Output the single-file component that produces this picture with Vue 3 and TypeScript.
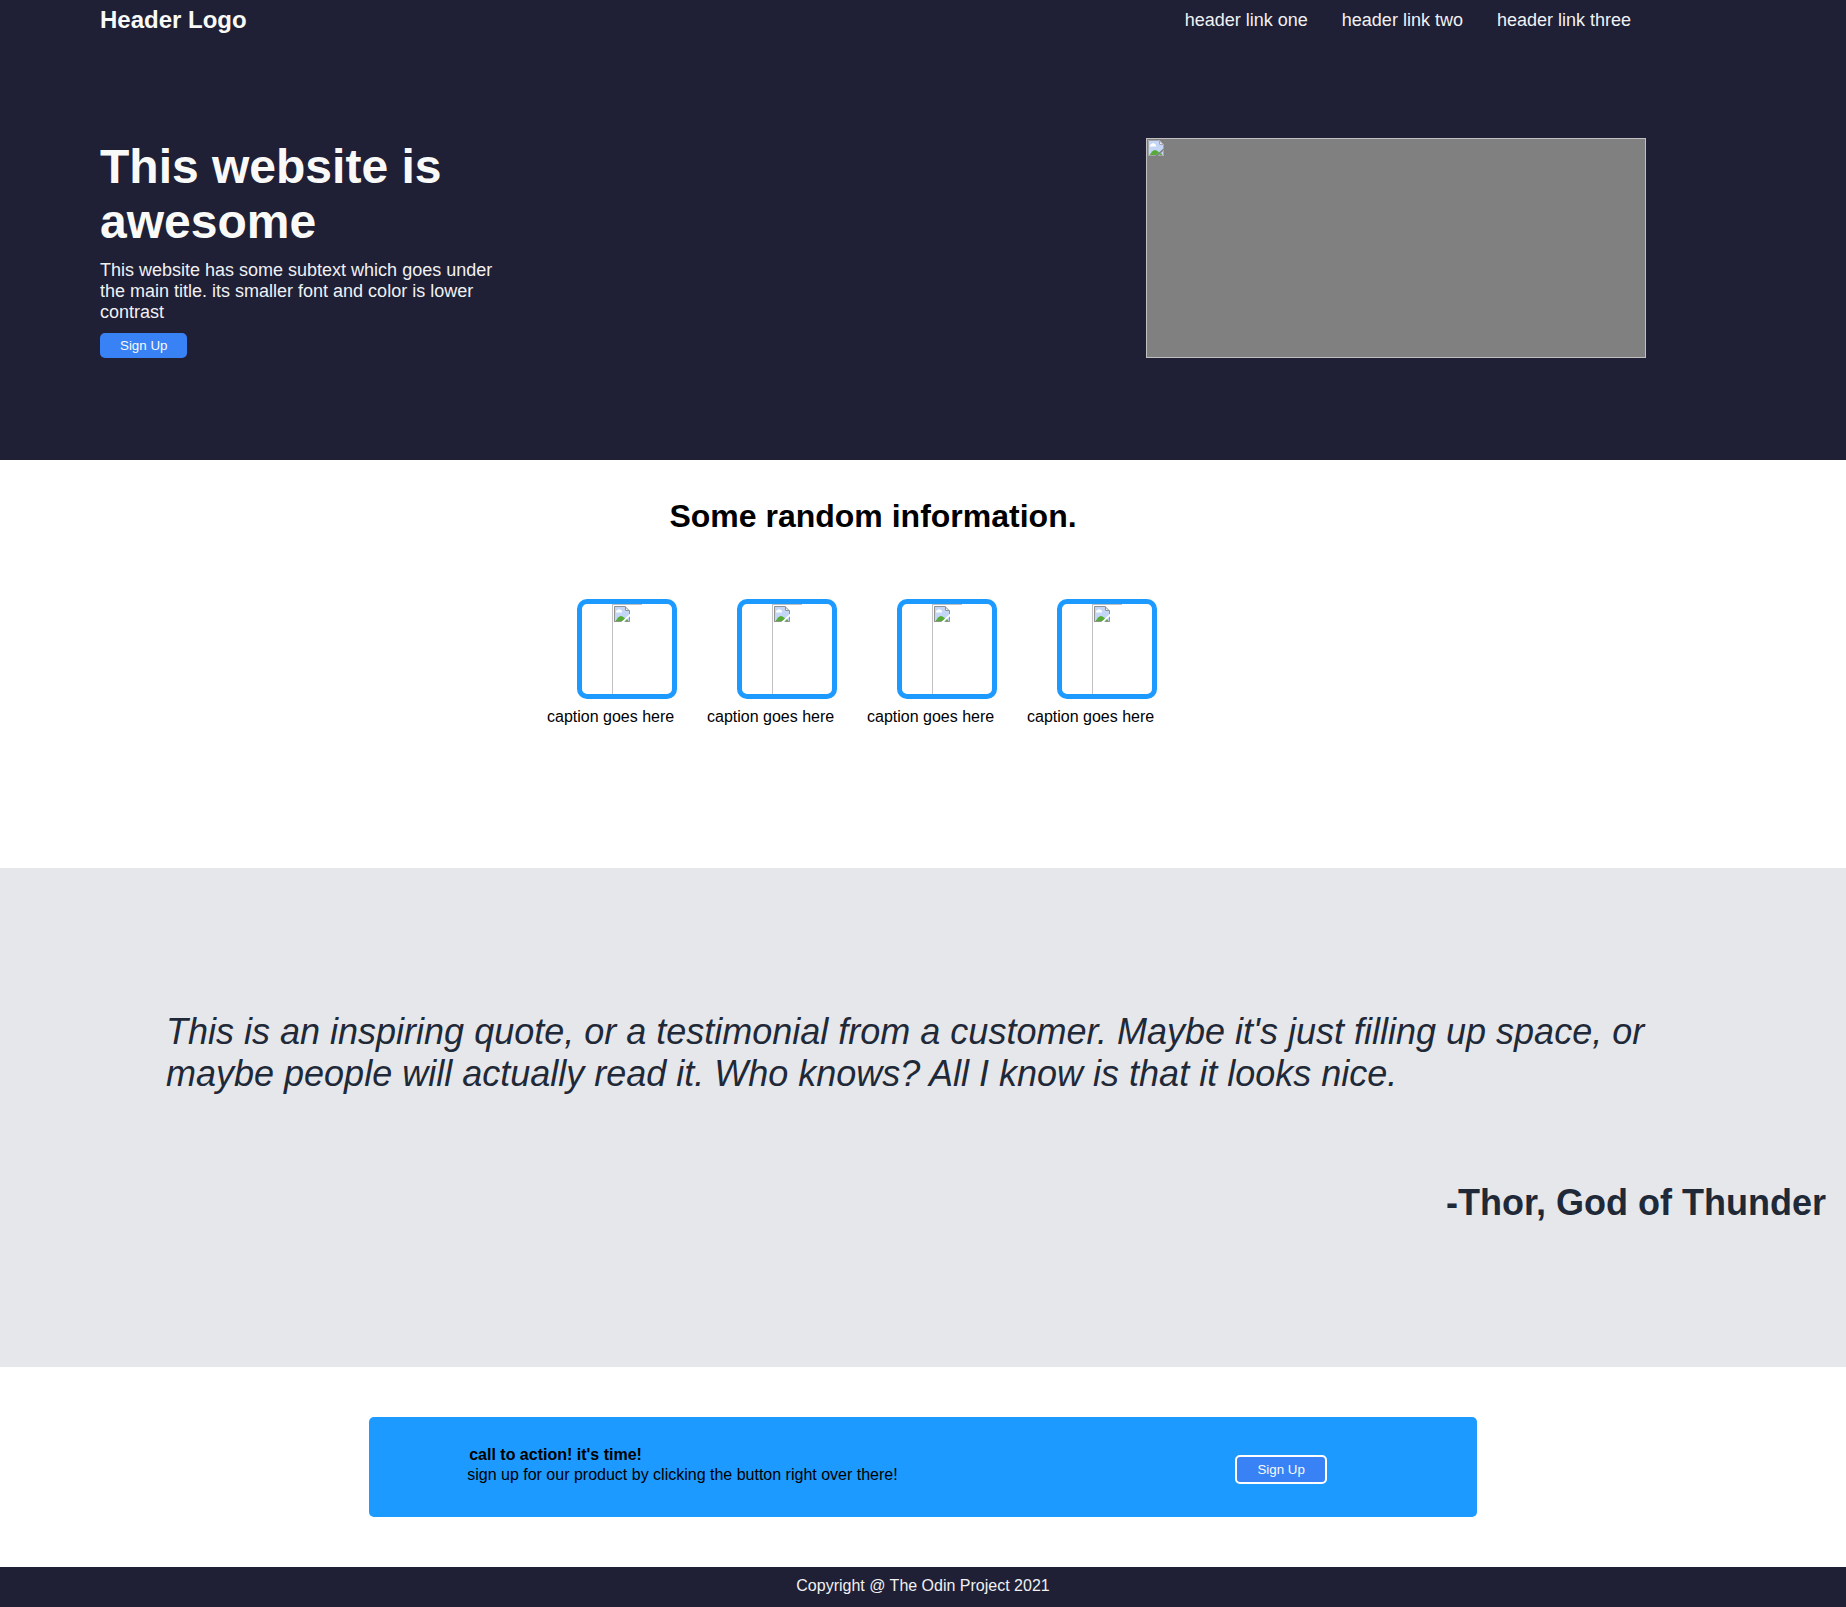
<script setup lang="ts">
interface NavLink {
  label: string
  href: string
}

const links: NavLink[] = [
  { label: 'header link one', href: '#one' },
  { label: 'header link two', href: '#two' },
  { label: 'header link three', href: '#three' },
]

const captions: string[] = Array.from({ length: 4 }, () => 'caption goes here')
</script>

<template>
  <div class="page">
    <div class="banner">
      <header class="header">
        <div class="logo">Header Logo</div>
        <nav class="nav">
          <a v-for="link in links" :key="link.href" :href="link.href">{{ link.label }}</a>
        </nav>
      </header>
      <section class="hero">
        <div class="hero-text">
          <h1>This website is awesome</h1>
          <p>
            This website has some subtext which goes under the main title. its smaller font and
            color is lower contrast
          </p>
          <button type="button" class="button">Sign Up</button>
        </div>
        <div class="hero-image">
          <svg width="16" height="16" viewBox="0 0 16 16" aria-hidden="true">
            <path d="M0 0H11L16 5V8L7 16H0Z" fill="#c3d6f6" />
            <path d="M2 6.5V5L3.5 4L5 3L7 4L8 5V6.5Z" fill="#fff" />
            <path d="M1 16L4 11.5Q7 8.5 10 11.5L11 12.5L7 16Z" fill="#55ab35" />
            <path d="M16 10V16H10Z" fill="#c3d6f6" />
            <path d="M13 13L15 16H10.5Z" fill="#55ab35" />
            <path d="M11 0L16 5H11Z" fill="#f4f4f4" />
            <path d="M0.5 16V0.5H11L15.5 5V8M11.5 0.5V4.5H15.5M0 15.5H7M11 15.5H15.5V11" fill="none" stroke="#a3a5ab" />
          </svg>
        </div>
      </section>
    </div>

    <section class="info">
      <h2>Some random information.</h2>
      <ul class="cards">
        <li v-for="(caption, index) in captions" :key="index">
          <div class="frame">
            <div class="picture">
              <svg width="16" height="16" viewBox="0 0 16 16" aria-hidden="true">
                <path d="M0 0H11L16 5V8L7 16H0Z" fill="#c3d6f6" />
                <path d="M2 6.5V5L3.5 4L5 3L7 4L8 5V6.5Z" fill="#fff" />
                <path d="M1 16L4 11.5Q7 8.5 10 11.5L11 12.5L7 16Z" fill="#55ab35" />
                <path d="M16 10V16H10Z" fill="#c3d6f6" />
                <path d="M13 13L15 16H10.5Z" fill="#55ab35" />
                <path d="M11 0L16 5H11Z" fill="#f4f4f4" />
                <path d="M0.5 16V0.5H11L15.5 5V8M11.5 0.5V4.5H15.5M0 15.5H7M11 15.5H15.5V11" fill="none" stroke="#929292" />
              </svg>
            </div>
          </div>
          <p>{{ caption }}</p>
        </li>
      </ul>
    </section>

    <section class="quote">
      <blockquote>
        This is an inspiring quote, or a testimonial from a customer. Maybe it's just filling up
        space, or maybe people will actually read it. Who knows? All I know is that it looks nice.
      </blockquote>
      <p class="author">-Thor, God of Thunder</p>
    </section>

    <section class="action">
      <div class="action-box">
        <div class="action-text">
          <h3>call to action! it's time!</h3>
          <p>sign up for our product by clicking the button right over there!</p>
        </div>
        <button type="button" class="button outlined">Sign Up</button>
      </div>
    </section>

    <footer class="footer">Copyright @ The Odin Project 2021</footer>
  </div>
</template>

<style>
body {
  margin: 0;
}
</style>

<style scoped>
.page {
  font-family: "Liberation Sans", Arial, sans-serif;
  font-size: 16px;
  color: #000;
  background: #fff;
}

h1,
h2,
h3,
p,
ul,
blockquote {
  margin: 0;
  padding: 0;
}

.banner {
  padding: 0 200px 102px 100px;
  background: #1f1f36;
}

.header {
  display: flex;
  align-items: center;
  justify-content: space-between;
  height: 40px;
}

.logo {
  font-size: 24px;
  font-weight: bold;
  color: #f9faf8;
}

.nav {
  display: flex;
  gap: 34px;
  padding-right: 15px;
}

.nav a {
  font-size: 18px;
  color: #f0f1f2;
  text-decoration: none;
}

.hero {
  display: flex;
  align-items: stretch;
  justify-content: space-between;
  padding-top: 98px;
}

.hero-text {
  width: 400px;
}

h1 {
  padding-top: 1px;
  font-size: 48px;
  line-height: 55px;
  color: #f9faf8;
}

.hero-text p {
  margin: 11px 0 10px;
  font-size: 18px;
  line-height: 21px;
  color: #f0f1f2;
}

.button {
  display: block;
  padding: 5px 20px;
  border: 0;
  border-radius: 5px;
  font-family: inherit;
  line-height: 15px;
  color: #f9faf8;
  background: #3882f6;
}

.hero-image {
  box-sizing: border-box;
  width: 500px;
  padding: 1px;
  border: 1px solid #c0c0c0;
  background: #808080;
}

svg {
  display: block;
}

.info {
  padding: 38px 200px 142px 100px;
}

h2 {
  font-size: 32px;
  line-height: 37px;
  text-align: center;
}

.cards {
  display: flex;
  justify-content: center;
  margin-top: 64px;
  padding-right: 12px;
  list-style: none;
}

.cards li {
  width: 160px;
}

.frame {
  box-sizing: border-box;
  width: 100px;
  height: 100px;
  margin-left: 30px;
  padding-left: 30px;
  border: 5px solid #1c9aff;
  border-radius: 10px;
  overflow: hidden;
}

/* Only the left edge and half of the top edge of the picture outline are visible */
.picture {
  box-sizing: border-box;
  height: 100%;
  padding: 2px 0 0 1px;
  border-left: 1px solid #c0c0c0;
  background: linear-gradient(#c0c0c0, #c0c0c0) 0 0 / 29px 1px no-repeat;
}

.cards p {
  margin-top: 9px;
  line-height: 18px;
}

.quote {
  padding: 143px 20px;
  font-size: 36px;
  line-height: 42px;
  color: #1f2937;
  background: #e5e7eb;
}

blockquote {
  margin: 0 146px;
  font-style: italic;
}

.author {
  margin-top: 87px;
  font-weight: bold;
  text-align: right;
}

.action {
  padding: 50px 20%;
}

.action-box {
  display: flex;
  align-items: flex-start;
  justify-content: space-between;
  padding: 28px 150px 32px 98px;
  border-radius: 5px;
  background: #1c9aff;
}

.action-text {
  line-height: 20px;
}

h3 {
  padding-left: 2px;
  font-size: 16px;
}

.outlined {
  margin-top: 10px;
  border: 2px solid #fff;
}

.footer {
  padding: 9px 0 11px;
  line-height: 20px;
  text-align: center;
  color: #f0f1f2;
  background: #1f1f36;
}
</style>
